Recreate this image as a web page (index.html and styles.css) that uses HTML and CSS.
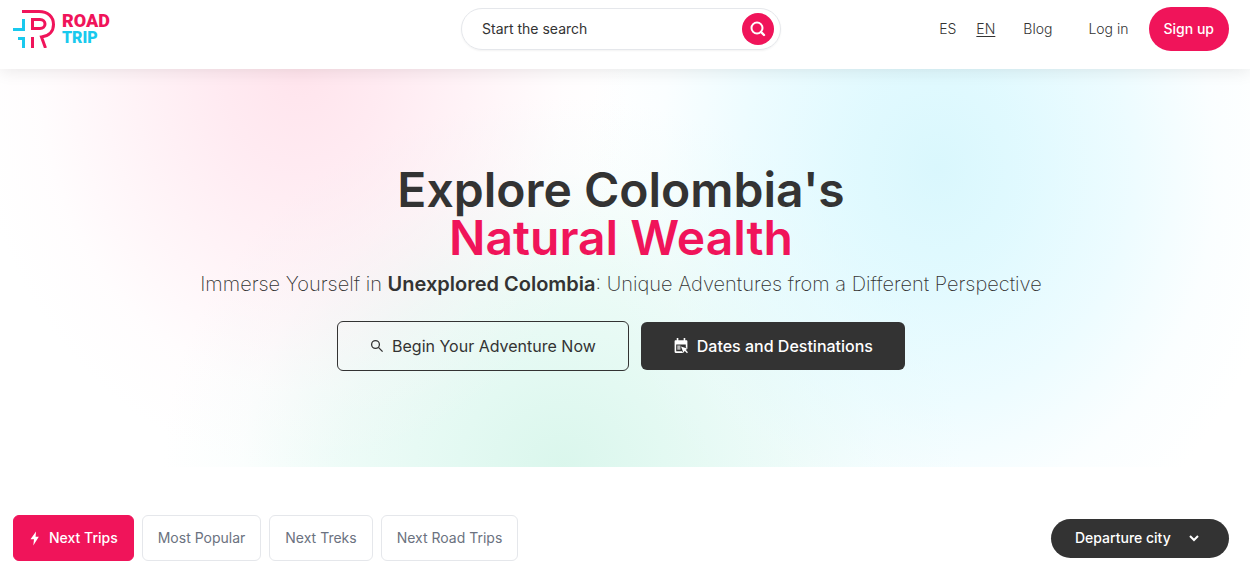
FILE: index.html
```html
<!DOCTYPE html>
<html lang="en">
<head>
<meta charset="utf-8">
<meta name="viewport" content="width=device-width, initial-scale=1">
<title>Road Trip</title>
<link rel="stylesheet" href="styles.css">
</head>
<body>
<header class="header">
  <a class="logo" href="#" aria-label="Road Trip home">
    <svg class="logo-mark" viewBox="0 0 43 38" fill="none" aria-hidden="true">
      <g stroke="#f0145a" stroke-width="3">
        <path d="M9 1.500H26C35 1.500 40.500 7 40.500 14.500C40.500 21.500 36 26 28.500 27L32.500 38"/>
        <path d="M19.500 18.500V9.500H27C30 9.500 32 11.500 32 14C32 16.500 30 18.500 27 18.500H18"/>
        <path d="M19.500 27V38"/>
      </g>
      <g stroke="#19c9ee" stroke-width="3">
        <path d="M10.500 9V19.500H0"/>
        <path d="M5 28.500H10.500V38"/>
      </g>
    </svg>
    <span class="logo-name"><span class="logo-road">ROAD</span><span class="logo-trip">TRIP</span></span>
  </a>
  <form class="search" role="search">
    <input class="search-input" type="text" placeholder="Start the search" aria-label="Start the search">
    <button class="search-button" type="button" aria-label="Search">
      <svg width="16" height="16" viewBox="0 0 16 16" fill="none" stroke="#fff" stroke-width="2" aria-hidden="true"><circle cx="7" cy="7" r="5.500"/><path d="M11 11L14 14" stroke-linecap="round" stroke-width="2.400"/></svg>
    </button>
  </form>
  <nav class="nav" aria-label="Main">
    <a class="nav-link" href="#">ES</a>
    <a class="nav-link nav-current" href="#">EN</a>
    <a class="nav-link nav-blog" href="#">Blog</a>
    <a class="nav-link nav-login" href="#">Log in</a>
    <a class="signup" href="#">Sign up</a>
  </nav>
</header>
<main>
  <section class="hero">
    <h1 class="hero-title">Explore Colombia's<br><span class="hero-accent">Natural Wealth</span></h1>
    <p class="hero-text">Immerse Yourself in <strong>Unexplored Colombia</strong>: Unique Adventures from a Different Perspective</p>
    <div class="hero-actions">
      <a class="button button-outline" href="#">
        <svg width="14" height="14" viewBox="0 0 14 14" fill="none" stroke="currentColor" stroke-width="1.300" aria-hidden="true"><circle cx="5.500" cy="5.500" r="3.900"/><path d="M8.400 8.400L12.600 12.600"/></svg>
        Begin Your Adventure Now
      </a>
      <a class="button button-dark" href="#">
        <svg width="16" height="16" viewBox="0 0 14 15" aria-hidden="true"><path fill="#fff" fill-rule="evenodd" d="M3 0H4.500V2H9.500V0H11V2H12C12.700 2 13 2.400 13 3V9.500L11.500 9V6H2.500V12.500H8L9 14H2C1.300 14 1 13.600 1 13V3C1 2.400 1.300 2 2 2H3Z"/><path fill="#fff" d="M7 8L13.500 10L11.400 11L13.500 13.300L12.600 14.200L10.400 12L9.400 14Z"/><path fill="#b9b9b9" d="M3.500 7H6.500V11H3.500Z"/></svg>
        Dates and Destinations
      </a>
    </div>
  </section>
  <section class="filters">
    <div class="tabs">
      <button class="tab tab-active" type="button">
        <svg width="12" height="15" viewBox="0 0 11 15" aria-hidden="true"><path fill="#fff" d="M6.500 .5L1 8.200H4.500L3.800 14.500L9.300 5.800H6.100Z"/></svg>
        Next Trips
      </button>
      <button class="tab" type="button">Most Popular</button>
      <button class="tab" type="button">Next Treks</button>
      <button class="tab" type="button">Next Road Trips</button>
    </div>
    <div class="city">
      <select class="city-select" aria-label="Departure city"><option>Departure city</option></select>
      <svg class="city-arrow" width="10" height="7" viewBox="0 0 10 7" fill="none" stroke="#fff" stroke-width="2" aria-hidden="true"><path d="M1 1L5 5L9 1"/></svg>
    </div>
  </section>
</main>
</body>
</html>
```
FILE: styles.css
```css
* { box-sizing: border-box; }
body {
  margin: 0;
  background: #fff;
  color: #333;
  font-family: Inter, sans-serif;
  font-size: 14px;
  line-height: 20px;
}
a { color: inherit; text-decoration: none; }
button, input, select { font: inherit; color: inherit; }
svg { flex: none; }

.header {
  position: relative;
  display: grid;
  grid-template-columns: 1fr 320px 1fr;
  align-items: center;
  padding: 7px 21px 18px 13px;
  background: #fff;
  box-shadow: 0 2px 16px rgba(0, 0, 0, 0.09);
}
.logo { display: flex; align-items: center; gap: 6px; }
.logo-mark { width: 43px; height: 38px; }
.logo-name {
  display: flex;
  flex-direction: column;
  font: 900 18px/17px Roboto, sans-serif;
}
.logo-road { color: #f0145a; }
.logo-trip { color: #19c9ee; font-size: 16px; }

.search {
  display: flex;
  align-items: center;
  height: 42px;
  padding: 0 6px 0 20px;
  border: 1px solid #e5e7eb;
  border-radius: 24px;
  box-shadow: 0 1px 2px rgba(0, 0, 0, 0.05);
}
.search-input {
  flex: 1;
  min-width: 0;
  padding: 0;
  border: 0;
  outline: 0;
  background: none;
}
.search-input::placeholder { color: #333; opacity: 1; }
.search-button {
  display: grid;
  place-items: center;
  width: 32px;
  height: 32px;
  padding: 0;
  border: 0;
  border-radius: 50%;
  background: #f0145a;
}
.nav { display: flex; align-items: center; justify-content: flex-end; gap: 20px; white-space: nowrap; }
.nav-link { font-weight: 300; }
.nav-current { text-decoration: underline; text-underline-offset: 2px; }
.nav-blog { margin: 0 16px 0 8px; }
.signup {
  padding: 12px 15px;
  border-radius: 24px;
  background: #f0145a;
  color: #fff;
  font-weight: 500;
}

.hero {
  display: flex;
  flex-direction: column;
  align-items: center;
  padding: 97px 21px 96px 13px;
  text-align: center;
  background:
    radial-gradient(ellipse 330px 400px at 24% 0%, rgba(255, 210, 224, 0.6), rgba(255, 214, 228, 0.5) 25%, rgba(255, 222, 233, 0.32) 55%, rgba(255, 235, 242, 0.12) 80%, rgba(255, 255, 255, 0) 100%),
    radial-gradient(ellipse 350px 420px at 75% 25%, rgba(203, 244, 252, 0.72), rgba(206, 246, 254, 0.62) 25%, rgba(215, 248, 255, 0.45) 55%, rgba(232, 250, 255, 0.2) 80%, rgba(255, 255, 255, 0) 100%),
    radial-gradient(ellipse 400px 370px at 45% 100%, rgba(204, 243, 229, 0.72), rgba(208, 245, 233, 0.6) 25%, rgba(216, 247, 238, 0.45) 55%, rgba(232, 250, 246, 0.18) 80%, rgba(255, 255, 255, 0) 100%),
    #fff;
}
.hero-title { margin: 0 0 8px; font-size: 48px; line-height: 48px; font-weight: 600; }
.hero-accent { color: #f0145a; }
.hero-text { margin: 0; font-size: 20px; line-height: 28px; font-weight: 200; }
.hero-text strong { font-weight: 600; }
.hero-actions { display: flex; flex-wrap: wrap; align-items: center; justify-content: center; gap: 12px; margin-top: 23px; }
.button {
  display: flex;
  align-items: center;
  justify-content: center;
  gap: 8px;
  padding: 12px 32px;
  border-radius: 6px;
  font-size: 16px;
  line-height: 24px;
}
.button-outline { border: 1px solid #333; }
.button-dark { background: #333; color: #fff; font-weight: 500; }

.filters {
  display: flex;
  align-items: center;
  justify-content: space-between;
  gap: 16px;
  padding: 48px 21px 21px 13px;
}
.tabs { display: flex; flex-wrap: wrap; gap: 8px; }
.tab {
  display: flex;
  align-items: center;
  gap: 8px;
  padding: 12px 15px;
  border: 1px solid #e5e7eb;
  border-radius: 6px;
  background: #fff;
  color: #6b7280;
}
.tab-active { border-color: #f0145a; background: #f0145a; color: #fff; font-weight: 500; }
.city { display: grid; align-items: center; }
.city-select {
  grid-area: 1 / 1;
  appearance: none;
  width: 178px;
  height: 39px;
  padding: 0 24px;
  border: 0;
  border-radius: 20px;
  background: #333;
  color: #fff;
  font-weight: 500;
}
.city-arrow { grid-area: 1 / 1; justify-self: end; margin-right: 30px; pointer-events: none; }
```
